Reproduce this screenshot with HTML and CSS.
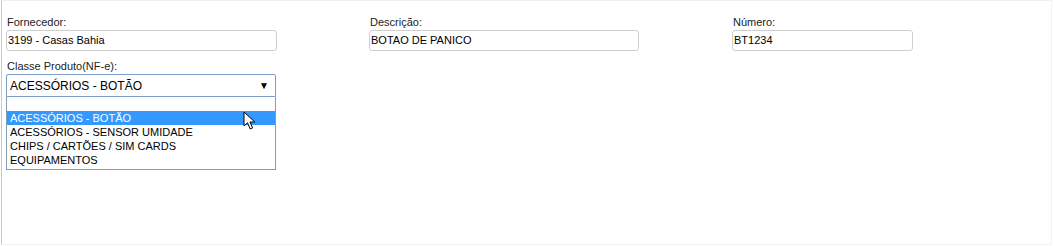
FILE: index.html
```html
<!DOCTYPE html>
<html>
<head>
<title>Cadastro de produto</title>
<link rel="stylesheet" href="styles.css">
</head>
<body>
	<!-- form panel -->
	<div class="panel">
		<div class="row">
			<div class="field">
				<label class="lbl">Fornecedor:</label>
				<div class="txt w271">3199 - Casas Bahia</div>
			</div>
			<div class="field">
				<label class="lbl">Descrição:</label>
				<div class="txt w270">BOTAO DE PANICO</div>
			</div>
			<div class="field">
				<label class="lbl">Número:</label>
				<div class="txt w181">BT1234</div>
			</div>
		</div>

		<!-- classe produto, dropdown open -->
		<div class="field classe">
			<label class="lbl">Classe Produto(NF-e):</label>
			<div class="combo">
				<div class="sel">
					<span>ACESSÓRIOS - BOTÃO</span>
					<span class="arrow">&#9660;</span>
				</div>
				<ul class="opts">
					<li>&nbsp;</li>
					<li class="hover">ACESSÓRIOS - BOTÃO</li>
					<li>ACESSÓRIOS - SENSOR UMIDADE</li>
					<li>CHIPS / CARTÕES / SIM CARDS</li>
					<li>EQUIPAMENTOS</li>
				</ul>
				<svg class="cursor" width="14" height="20" viewBox="0 0 14 20">
					<path d="M1 1 L1 15 L4.5 11.8 L7.2 18 L9.6 17 L7 11 L11.8 11 Z" fill="#fff" stroke="#000" stroke-width="1" stroke-linejoin="miter"/>
				</svg>
			</div>
		</div>
	</div>
</body>
</html>
```

FILE: styles.css
```css
body {
	margin: 0;
	background: #fff;
	font-family: "Liberation Sans", Arial, sans-serif;
	color: #000;
}

.panel {
	margin-left: 1px;
	height: 245px;
	border-top: 1px solid #efefef;
	border-left: 1px solid #c9c9c9;
	border-right: 1px solid #f3f3f3;
	border-bottom: 1px solid #f3f3f3;
	padding: 15px 0 0 4px;
	box-sizing: border-box;
	width: 1051px;
}

.row {
	display: grid;
	grid-template-columns: 363px 363px 363px;
}

.field {
	display: flex;
	flex-direction: column;
	align-items: flex-start;
}

.lbl {
	font-size: 11px;
	line-height: 13px;
	padding-left: 1px;
	color: #222;
}

.txt {
	margin-top: 1px;
	height: 21px;
	box-sizing: border-box;
	border: 1px solid #cfcfcf;
	border-radius: 3px;
	font-size: 11px;
	line-height: 19px;
	padding-left: 1px;
}
.w271 { width: 271px; }
.w270 { width: 270px; }
.w181 { width: 181px; }

.classe {
	margin-top: 9px;
}

.combo {
	position: relative;
	width: 270px;
	margin-top: 1px;
}

.sel {
	height: 23px;
	box-sizing: border-box;
	border: 1px solid #7f9dc9;
	border-radius: 2px 2px 0 0;
	display: flex;
	justify-content: space-between;
	align-items: center;
	font-size: 12px;
	padding: 0 6px 0 3px;
}

.arrow {
	font-size: 10px;
}

.opts {
	list-style: none;
	margin: 0;
	padding: 0 0 2px 0;
	border: 1px solid #7f9db9;
	border-top: none;
	font-size: 11px;
}
.opts li {
	height: 14px;
	line-height: 14px;
	padding-left: 3px;
	white-space: nowrap;
}
.opts li.hover {
	background: #3399ff;
	color: #fff;
}

.cursor {
	position: absolute;
	left: 237px;
	top: 37px;
}
```
